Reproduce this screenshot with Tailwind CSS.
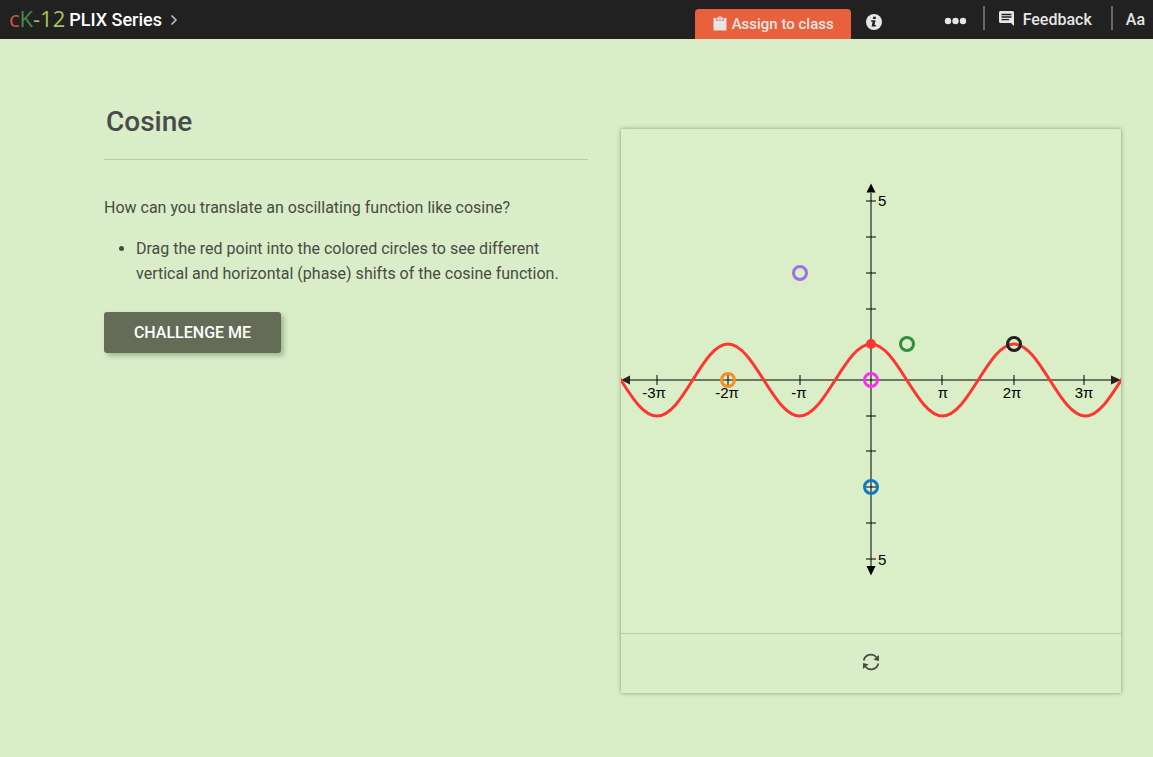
<!DOCTYPE html>
<html lang="en">
<head>
  <meta charset="UTF-8">
  <meta name="viewport" content="width=device-width, initial-scale=1.0">
  <title>Cosine - PLIX Series</title>
  <script src="https://cdn.jsdelivr.net/npm/@tailwindcss/browser@4"></script>
</head>
<body class="min-h-screen bg-[#d9edc8] text-[#4a4a44] font-['Roboto',sans-serif]">
  <!-- Top bar -->
  <header class="flex h-[39px] items-center justify-between bg-[#212121] pl-[9px] pr-2 text-base font-medium text-[#e6e6e6]">
    <nav class="flex items-center">
      <a href="#" class="pb-1 font-['Open_Sans',sans-serif] text-[22px] leading-[34px] font-medium text-[#a3c55f]"><span class="text-[#d0552f]">c</span><span class="text-[#4b8a46]">K</span>-12</a>
      <a href="#" class="ml-1 flex items-center text-lg leading-6 text-white">PLIX Series
        <svg class="ml-2 h-3 w-2" viewBox="0 0 8 12" fill="none" stroke="#c4c4c4" stroke-width="1.5"><path d="M1.500 1.500 L6 6 L1.500 10.500"/></svg>
      </a>
    </nav>
    <div class="flex h-full items-center">
      <button class="flex h-[30px] w-[156px] items-center justify-center gap-1 self-end rounded-t bg-[#e8603c] text-[15px]">
        <svg class="h-4 w-4" viewBox="0 0 16 16" fill="#e6e6e6"><path d="M2 2 H4 V4.500 H12 V2 H14 Q14.500 2 14.500 2.500 V14 Q14.500 14.500 14 14.500 H2 Q1.500 14.500 1.500 14 V2.500 Q1.500 2 2 2 Z"/><path d="M4.600 3.700 V2.400 Q4.600 1.600 5.600 1.600 H6.300 Q6.600 0 8 0 Q9.400 0 9.700 1.600 H10.400 Q11.400 1.600 11.400 2.400 V3.700 Z M8 .8 A.7 .7 0 1 0 8 2.200 A.7 .7 0 1 0 8 .8 Z" fill-rule="evenodd"/></svg>
        Assign to class
      </button>
      <button class="mt-1 ml-[15px]" aria-label="Info">
        <svg class="h-4 w-4" viewBox="0 0 16 16"><circle cx="8" cy="8" r="8" fill="#e6e6e6"/><path d="M7.200 2.700 H10 L9.600 5 H6.800 Z M5.300 6.200 H9.500 L8.500 11 H10 L9.700 12.600 H5.600 L6.600 7.800 H5 Z" fill="#212121"/></svg>
      </button>
      <button class="mt-[2px] ml-[62px]" aria-label="More">
        <svg class="h-2 w-[23px]" viewBox="0 0 23 8" fill="#e6e6e6"><circle cx="4" cy="4" r="3.200"/><circle cx="11.500" cy="4" r="3.200"/><circle cx="19" cy="4" r="3.200"/></svg>
      </button>
      <div class="mb-1 ml-4 h-6 w-[2px] bg-[#666]"></div>
      <button class="ml-[14px] flex items-center gap-2">
        <svg class="mb-[2px] h-4 w-4" viewBox="0 0 16 16"><path d="M1.500 0 H13.500 Q15 0 15 1.500 V15 L12 12 H1.500 Q0 12 0 10.500 V1.500 Q0 0 1.500 0 Z" fill="#e6e6e6"/><path d="M2.500 3.500 H12.500 M2.500 6 H12.500 M2.500 8.700 H10" stroke="#212121" stroke-width="1.300"/></svg>
        Feedback
      </button>
      <div class="mb-1 ml-[19px] h-6 w-[2px] bg-[#666]"></div>
      <button class="ml-[13px]">Aa</button>
    </div>
  </header>

  <main class="flex items-start gap-[33px] pr-8 pl-[104px]">
    <!-- Question -->
    <section class="min-w-0 flex-1 pt-[62px]">
      <h1 class="border-b border-[#b6cba7] pb-4 pl-[2px] text-[28px] leading-[42px] font-medium text-[#4a4a4a]">Cosine</h1>
      <p class="mt-9 text-base leading-6">How can you translate an oscillating function like cosine?</p>
      <ul class="mt-4 list-disc pl-8 text-base leading-[25px]">
        <li>Drag the red point into the colored circles to see different vertical and horizontal (phase) shifts of the cosine function.</li>
      </ul>
      <button class="mt-[26px] h-[41px] w-[177px] rounded-[3px] bg-[#646c58] text-base font-medium text-white shadow-[3px_3px_5px_rgba(80,100,70,0.4)]">CHALLENGE ME</button>
    </section>

    <!-- Graph -->
    <section class="mt-[90px] w-[500px] bg-[#daeec8] shadow-[0_0_4px_rgba(70,95,60,0.6)]">
      <svg class="block w-full" viewBox="0 0 500 504" role="img" aria-label="Graph of the cosine function">
        <!-- axes and ticks -->
        <g stroke="#000" stroke-opacity="0.5" stroke-width="2">
          <path d="M9 251 H491"/>
          <path d="M250 64 V438"/>
          <path d="M245 72 H255 M245 108 H255 M245 144 H255 M245 180 H255 M245 287 H255 M245 322 H255 M245 358 H255 M245 394 H255 M245 430 H255"/>
          <path d="M36 246 V256 M107 246 V256 M179 246 V256 M321 246 V256 M393 246 V256 M463 246 V256"/>
        </g>
        <path d="M250 54.500 L254.500 63.500 H245.500 Z M250 446.500 L254.500 437 H245.500 Z"/>
        <path d="M0 251 L9 246.500 V255.500 Z M500 251 L490 246.500 V255.500 Z" fill="#222"/>
        <g class="font-['Liberation_Sans',sans-serif] text-[15px]" fill="#000">
          <text x="257" y="77">5</text>
          <text x="257" y="436">5</text>
          <g text-anchor="middle">
            <text x="33" y="269">-3π</text>
            <text x="106" y="269">-2π</text>
            <text x="178" y="269">-π</text>
            <text x="322" y="269">π</text>
            <text x="391" y="269">2π</text>
            <text x="463" y="269">3π</text>
          </g>
        </g>
        <!-- cosine curve -->
        <path d="M-36 215 C-10 215 9.500 287 36 287 S81 215 107 215 S152.500 287 178.500 287 S224 215 250 215 S295.500 287 321.500 287 S367 215 393 215 S438.500 287 464.500 287 S510 215 536 215" fill="none" stroke="#fb3730" stroke-width="3"/>
        <circle cx="250" cy="215" r="5" fill="#fb3730"/>
        <!-- target circles -->
        <g fill="none" stroke-width="3">
          <circle cx="179" cy="144" r="6.500" stroke="#9e73dd"/>
          <circle cx="286" cy="215" r="6.500" stroke="#2f8f3d"/>
          <circle cx="393" cy="215" r="6.500" stroke="#222"/>
          <circle cx="107" cy="251" r="6.500" stroke="#fb8c23"/>
          <circle cx="250" cy="251" r="6.500" stroke="#fb2cf5"/>
          <circle cx="250" cy="358" r="6.500" stroke="#0f79c4"/>
        </g>
      </svg>
      <div class="flex h-[60px] items-center justify-center border-t border-[#b6cba7] bg-[#d9edc8] pb-1">
        <button aria-label="Reset">
          <svg class="h-[18px] w-[18px]" viewBox="0 0 18 18"><path d="M1.700 7.500 A7.300 7.300 0 0 1 14.500 4.300 M16.300 10.500 A7.300 7.300 0 0 1 3.500 13.700" fill="none" stroke="#4a4a44" stroke-width="1.700"/><path d="M17 2 V8 L11.500 6.800 Z M1 10 V16 L6.500 11.200 Z" fill="#4a4a44"/></svg>
        </button>
      </div>
    </section>
  </main>
</body>
</html>
